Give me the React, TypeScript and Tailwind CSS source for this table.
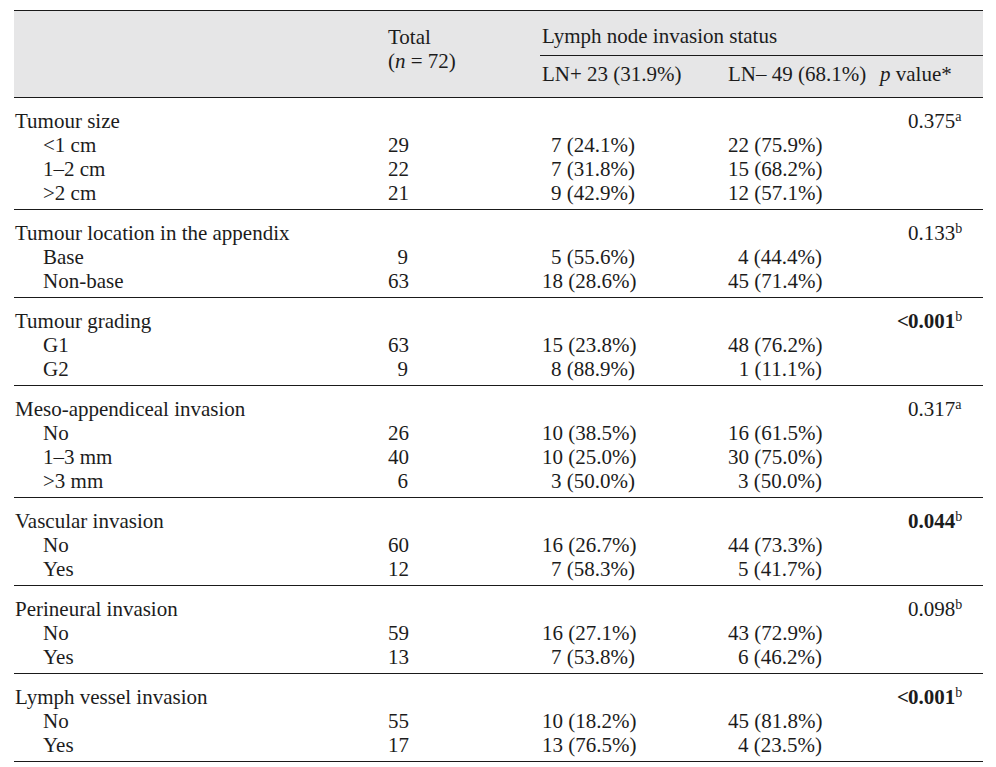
import React from 'react';

type Sub = { label: string; total: string; pos: string; neg: string };
type Group = { title: string; p: string; sup: string; bold?: boolean; lt?: boolean; rows: Sub[] };

const groups: Group[] = [
  {
    title: 'Tumour size',
    p: '0.375',
    sup: 'a',
    rows: [
      { label: '<1 cm', total: '29', pos: '7 (24.1%)', neg: '22 (75.9%)' },
      { label: '1–2 cm', total: '22', pos: '7 (31.8%)', neg: '15 (68.2%)' },
      { label: '>2 cm', total: '21', pos: '9 (42.9%)', neg: '12 (57.1%)' },
    ],
  },
  {
    title: 'Tumour location in the appendix',
    p: '0.133',
    sup: 'b',
    rows: [
      { label: 'Base', total: '9', pos: '5 (55.6%)', neg: '4 (44.4%)' },
      { label: 'Non-base', total: '63', pos: '18 (28.6%)', neg: '45 (71.4%)' },
    ],
  },
  {
    title: 'Tumour grading',
    p: '0.001',
    sup: 'b',
    bold: true,
    lt: true,
    rows: [
      { label: 'G1', total: '63', pos: '15 (23.8%)', neg: '48 (76.2%)' },
      { label: 'G2', total: '9', pos: '8 (88.9%)', neg: '1 (11.1%)' },
    ],
  },
  {
    title: 'Meso-appendiceal invasion',
    p: '0.317',
    sup: 'a',
    rows: [
      { label: 'No', total: '26', pos: '10 (38.5%)', neg: '16 (61.5%)' },
      { label: '1–3 mm', total: '40', pos: '10 (25.0%)', neg: '30 (75.0%)' },
      { label: '>3 mm', total: '6', pos: '3 (50.0%)', neg: '3 (50.0%)' },
    ],
  },
  {
    title: 'Vascular invasion',
    p: '0.044',
    sup: 'b',
    bold: true,
    rows: [
      { label: 'No', total: '60', pos: '16 (26.7%)', neg: '44 (73.3%)' },
      { label: 'Yes', total: '12', pos: '7 (58.3%)', neg: '5 (41.7%)' },
    ],
  },
  {
    title: 'Perineural invasion',
    p: '0.098',
    sup: 'b',
    rows: [
      { label: 'No', total: '59', pos: '16 (27.1%)', neg: '43 (72.9%)' },
      { label: 'Yes', total: '13', pos: '7 (53.8%)', neg: '6 (46.2%)' },
    ],
  },
  {
    title: 'Lymph vessel invasion',
    p: '0.001',
    sup: 'b',
    bold: true,
    lt: true,
    rows: [
      { label: 'No', total: '55', pos: '10 (18.2%)', neg: '45 (81.8%)' },
      { label: 'Yes', total: '17', pos: '13 (76.5%)', neg: '4 (23.5%)' },
    ],
  },
];

function Row({ label, total, pos, neg, indent, p }: {
  label: string; total?: string; pos?: string; neg?: string; indent?: boolean; p?: React.ReactNode;
}) {
  return (
    <div className="flex h-[24px] items-center whitespace-nowrap">
      <div className={`w-[374px] ${indent ? 'pl-[29px]' : 'pl-[1px]'}`}>{label}</div>
      <div className="w-[20px] text-right">{total}</div>
      <div className="ml-[134px] w-[93px] text-right">{pos}</div>
      <div className="ml-[93px] w-[94px] text-right">{neg}</div>
      <div className="ml-[58px] flex-1 pl-[17px]">{p}</div>
    </div>
  );
}

export default function App() {
  return (
    <div className="min-h-[767px] bg-white pt-[10px] text-[#1c1c1c]" style={{ fontFamily: '"Liberation Serif", "Times New Roman", serif' }}>
      <div className="ml-[14px] w-[969px] text-[21px] leading-[24px]">
        {/* Header */}
        <div className="flex h-[88px] border-y border-[#1a1a1a] bg-[#e6e6e7]">
          <div className="w-[374px]" />
          <div className="w-[152px] pt-[14px] whitespace-nowrap">
            <div>Total</div>
            <div>(<i>n</i> = 72)</div>
          </div>
          <div className="flex-1">
            <div className="h-[45px] border-b border-[#1a1a1a] pl-[2px] pt-[13px]">Lymph node invasion status</div>
            <div className="flex pl-[2px] pt-[6px] whitespace-nowrap">
              <div className="w-[186px]">LN+ 23 (31.9%)</div>
              <div className="w-[152px]">LN– 49 (68.1%)</div>
              <div><i>p</i> value*</div>
            </div>
          </div>
        </div>

        {/* Body */}
        {groups.map((g) => (
          <div key={g.title} className="border-b border-[#1a1a1a] pt-[11px] pb-[4px]">
            <Row
              label={g.title}
              p={
                <>
                  <span className={`inline-block w-[11px] text-right ${g.bold ? 'font-bold' : ''}`}>{g.lt ? '<' : ''}</span>
                  <span className={g.bold ? 'font-bold' : ''}>{g.p}</span>
                  <sup className="top-[-0.5em] text-[14px]">{g.sup}</sup>
                </>
              }
            />
            {g.rows.map((r) => (
              <Row key={r.label} indent label={r.label} total={r.total} pos={r.pos} neg={r.neg} />
            ))}
          </div>
        ))}
      </div>
    </div>
  );
}
